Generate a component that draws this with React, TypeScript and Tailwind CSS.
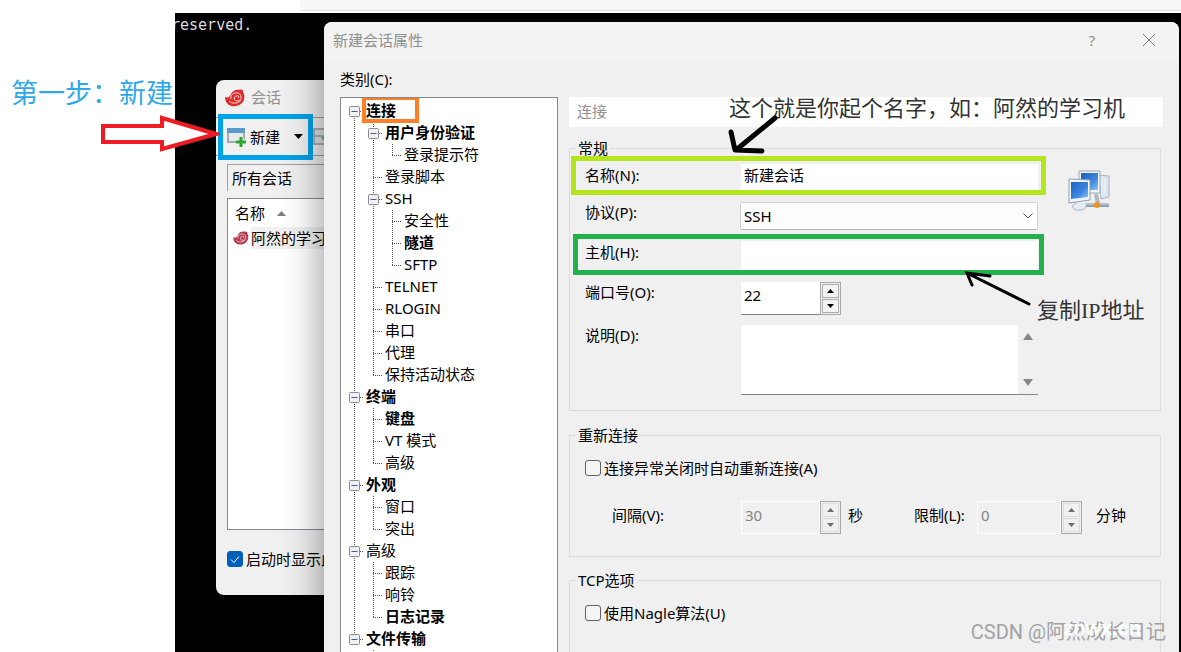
import { useState } from "react";
import type { ReactNode } from "react";

type Guide = "line" | "none";

interface TreeItem {
  label: string;
  depth: number;
  bold?: boolean;
  open?: boolean;
  selected?: boolean;
}

const TREE: TreeItem[] = [
  { label: "连接", depth: 0, bold: true, open: true, selected: true },
  { label: "用户身份验证", depth: 1, bold: true, open: true },
  { label: "登录提示符", depth: 2 },
  { label: "登录脚本", depth: 1 },
  { label: "SSH", depth: 1, open: true },
  { label: "安全性", depth: 2 },
  { label: "隧道", depth: 2, bold: true },
  { label: "SFTP", depth: 2 },
  { label: "TELNET", depth: 1 },
  { label: "RLOGIN", depth: 1 },
  { label: "串口", depth: 1 },
  { label: "代理", depth: 1 },
  { label: "保持活动状态", depth: 1 },
  { label: "终端", depth: 0, bold: true, open: true },
  { label: "键盘", depth: 1, bold: true },
  { label: "VT 模式", depth: 1 },
  { label: "高级", depth: 1 },
  { label: "外观", depth: 0, bold: true, open: true },
  { label: "窗口", depth: 1 },
  { label: "突出", depth: 1 },
  { label: "高级", depth: 0, open: true },
  { label: "跟踪", depth: 1 },
  { label: "响铃", depth: 1 },
  { label: "日志记录", depth: 1, bold: true },
  { label: "文件传输", depth: 0, bold: true, open: true },
  { label: "", depth: 1 },
];

// True when a later sibling exists at this depth, so its guide must go on
function continues(index: number, depth: number) {
  for (let i = index + 1; i < TREE.length; i++) {
    if (TREE[i].depth < depth) return false;
    if (TREE[i].depth === depth) return true;
  }
  return false;
}

function GuideCell({ kind }: { kind: Guide }) {
  return (
    <svg className="h-[22px] w-[19px] shrink-0" viewBox="0 0 19 22">
      {kind === "line" && <path d="M9.5 0V22" stroke="#555" strokeDasharray="1 1" />}
    </svg>
  );
}

function BranchCell({ first, last, open }: { first: boolean; last: boolean; open?: boolean }) {
  return (
    <svg className="h-[22px] w-[19px] shrink-0" viewBox="0 0 19 22">
      <g stroke="#555" strokeDasharray="1 1" fill="none">
        {!first && <path d="M9.5 0V12" />}
        {!last && <path d="M9.5 12V22" />}
        <path d="M9 11.5H19" />
      </g>
      {open && (
        <>
          <rect x="4.5" y="6.5" width="10" height="10" rx="1" fill="#f1f1f1" stroke="#8c8c8c" />
          <path d="M6.5 11.5h6" stroke="#4158a6" />
        </>
      )}
    </svg>
  );
}

function CategoryTree() {
  return (
    <ul className="w-[218px] shrink-0 overflow-hidden border border-b-0 border-[#828790] bg-white pt-[2px] pl-1">
      {TREE.map((item, i) => (
        <li key={i} className="flex h-[22px] items-start">
          {Array.from({ length: item.depth }, (_, d) => (
            <GuideCell key={d} kind={continues(i, d) ? "line" : "none"} />
          ))}
          <BranchCell first={i === 0} last={!continues(i, item.depth)} open={item.open} />
          <span className={item.bold ? "relative ml-[2px] font-bold leading-5" : "ml-[2px] leading-5"}>
            {item.label}
            {item.selected && (
              <span className="absolute -top-1 -left-1 h-[27px] w-[57px] border-4 border-[#ff7f27]" />
            )}
          </span>
        </li>
      ))}
    </ul>
  );
}

function SnailIcon({ className, color }: { className: string; color: string }) {
  return (
    <svg className={className} viewBox="0 0 20 18">
      <path
        d="M0 8C3 9 5 8 6 5C8 1 12 0 14 1C16 0 19 1 18 3C20 6 20 11 17 14C13 18 7 18 4 16C1 14 0 11 0 8Z"
        fill={color}
      />
      <path
        d="M6 10C5 6 9 3 13 4C17 5 17 11 13 12C9 13 8 8 11 7C13 6 15 8 13 9M4 12C7 15 13 15 16 11"
        fill="none"
        stroke="#fff"
        strokeOpacity="0.8"
      />
    </svg>
  );
}

function NewWindowIcon() {
  return (
    <svg className="h-5 w-5" viewBox="0 0 20 20">
      <rect x="1" y="2" width="16" height="13" fill="#e6eaec" stroke="#a7abae" strokeWidth="2" />
      <path d="M0 1h18v5H0z" fill="#5b98cc" />
      <path d="M14 10v10M9 15h10" stroke="#f0f0f0" strokeWidth="5" />
      <path d="M14 10v10M9 15h10" stroke="#2aa52f" strokeWidth="3" />
    </svg>
  );
}

function NetworkIcon() {
  return (
    <svg className="mt-[6px] h-[42px] w-[42px] shrink-0" viewBox="0 0 42 42">
      <defs>
        <linearGradient id="screen" x1="0" y1="0" x2="1" y2="1">
          <stop offset="0" stopColor="#1f5fc0" />
          <stop offset="0.6" stopColor="#3d86e0" />
          <stop offset="1" stopColor="#8cc9f5" />
        </linearGradient>
      </defs>
      <path d="M31 5l10 1v21l-8 2z" fill="#dbe5ec" stroke="#a5b5c0" />
      <path d="M34 8v18M37 9v16" stroke="#f4f8fa" />
      <path d="M11 1l21 0v22l-21 0z" fill="#f1f5f8" stroke="#9aabb7" />
      <path d="M13 3h17v17H13z" fill="url(#screen)" />
      <path d="M28 24l2 10" stroke="#aab9c3" strokeWidth="4" />
      <path d="M18 35h23" stroke="#8f9ea8" strokeWidth="4" />
      <path d="M18 34h23" stroke="#dde5ea" />
      <path d="M8 33c-6 3-3 8 4 7c5 0 7-3 6-7" fill="#e6ecf0" stroke="#a5b3bc" />
      <path d="M1 9l21 1v20l-21 3z" fill="#f1f5f8" stroke="#8ea0ae" />
      <path d="M3 12l17 0v15l-17 2z" fill="url(#screen)" />
      <circle cx="29" cy="35" r="3" fill="#f0941c" />
    </svg>
  );
}

function StepArrow({ up }: { up?: boolean }) {
  return (
    <svg className="h-1 w-[7px]" viewBox="0 0 7 4">
      <path d={up ? "M0 4L3.5 0L7 4z" : "M0 0h7L3.5 4z"} fill="currentColor" />
    </svg>
  );
}

interface SpinBoxProps {
  id: string;
  value: string;
  disabled?: boolean;
  className: string;
}

function SpinBox({ id, value, disabled, className }: SpinBoxProps) {
  const [text, setText] = useState(value);
  const step = (by: number) => setText(String(Math.max(0, Number(text) + by)));
  const button = disabled
    ? "flex flex-1 items-center justify-center border border-[#dcdcdc] text-[#6d6d6d]"
    : "flex flex-1 items-center justify-center border border-[#ababab] bg-[#f3f3f3] text-black";

  return (
    <div className={`flex h-[33px] shrink-0 ${className}`}>
      <input
        id={id}
        value={text}
        disabled={disabled}
        onChange={e => setText(e.target.value)}
        className={
          disabled
            ? "min-w-0 flex-1 border border-white bg-[#f0f0f0] px-[3px] pb-[5px] text-[#838383]"
            : "min-w-0 flex-1 border-b border-[#858585] bg-white px-[3px] pb-[6px]"
        }
      />
      <div className="flex w-[21px] flex-col gap-px border border-[#a8a8a8] p-px">
        <button type="button" aria-label="+" disabled={disabled} onClick={() => step(1)} className={button}>
          <StepArrow up />
        </button>
        <button type="button" aria-label="-" disabled={disabled} onClick={() => step(-1)} className={button}>
          <StepArrow />
        </button>
      </div>
    </div>
  );
}

function Group({ title, className, children }: { title: string; className: string; children: ReactNode }) {
  return (
    <fieldset className={`mr-[2px] border border-[#dcdcdc] ${className}`}>
      <legend className="ml-[6px] px-[2px] leading-5">{title}</legend>
      {children}
    </fieldset>
  );
}

function CheckRow({ id, label }: { id: string; label: string }) {
  return (
    <div className="flex h-[18px] items-center gap-[3px]">
      <input
        id={id}
        type="checkbox"
        className="h-4 w-4 appearance-none rounded-[3px] border border-[#626262] bg-[#f5f5f5] checked:bg-[#005fb8]"
      />
      <label htmlFor={id} className="leading-5">{label}</label>
    </div>
  );
}

function SessionsWindow() {
  return (
    <section className="absolute top-[67px] left-[41px] flex h-[515px] w-[400px] flex-col overflow-hidden rounded-lg bg-[#f0f0f0]">
      <div className="flex h-[37px] shrink-0 items-center gap-[6px] pb-[2px] pl-[9px] text-[#8f8f8f]">
        <SnailIcon className="h-[18px] w-5" color="#e02b2b" />
        <span>会话</span>
      </div>
      <div className="relative flex h-[39px] shrink-0 items-center border-y border-[#a0a0a0] pl-[11px]">
        <button type="button" className="flex items-center gap-[3px]">
          <NewWindowIcon />
          <span className="leading-5">新建</span>
        </button>
        <svg className="ml-[14px] h-[5px] w-[9px]" viewBox="0 0 9 5">
          <path d="M0 0h9L4.500 5z" />
        </svg>
        <svg className="ml-[10px] h-[18px] w-[18px]" viewBox="0 0 18 18">
          <path d="M1 1h12v7H1zM1 8h12v8H1z" fill="#dfe3e3" stroke="#a9afaf" strokeWidth="2" />
          <path d="M8 9l5 7V9z" fill="#57b783" />
        </svg>
        <span className="pointer-events-none absolute -top-1 left-[2px] h-[46px] w-[95px] border-[5px] border-[#00a2e8]" />
      </div>
      <div className="mt-2 ml-[11px] h-[27px] shrink-0 border-t border-l border-[#a0a0a0] pl-1 leading-[26px]">
        所有会话
      </div>
      <div className="mt-[7px] ml-[11px] h-[332px] shrink-0 border border-[#828790] bg-white">
        <div className="flex h-7 items-center gap-[12px] pl-[7px]">
          <span>名称</span>
          <svg className="h-[5px] w-[9px]" viewBox="0 0 9 5">
            <path d="M0 5L4.500 0L9 5z" fill="#7d7d7d" />
          </svg>
        </div>
        <div className="flex h-[22px] items-center gap-[2px] pl-[5px]">
          <SnailIcon className="h-[14px] w-4" color="#b23a52" />
          <span className="bg-[#f0f0f0] leading-[22px]">阿然的学习机</span>
        </div>
      </div>
      <div className="mt-[19px] flex items-center gap-[3px] pl-[11px]">
        <span className="relative flex h-4 w-4">
          <input
            id="on-start"
            type="checkbox"
            defaultChecked
            className="peer h-4 w-4 appearance-none rounded-[3px] border border-[#005fb8] bg-white checked:bg-[#005fb8]"
          />
          <svg className="pointer-events-none absolute inset-0 hidden h-4 w-4 peer-checked:block" viewBox="0 0 16 16">
            <path d="M4 8.500l3 3l5-6" fill="none" stroke="#fff" />
          </svg>
        </span>
        <label htmlFor="on-start" className="leading-5">启动时显示此</label>
      </div>
    </section>
  );
}

function GeneralGroup() {
  const [name, setName] = useState("新建会话");

  return (
    <Group title="常规" className="mt-[11px] pb-[15px]">
      <div className="flex gap-[30px] pt-[6px] pr-[50px] pl-[15px]">
        <div className="flex min-w-0 flex-1 flex-col gap-[11px] leading-5">
          <div className="relative flex h-[27px]">
            <label htmlFor="name" className="w-[156px] shrink-0 leading-[22px]">名称(N):</label>
            <input
              id="name"
              value={name}
              onChange={e => setName(e.target.value)}
              className="min-w-0 flex-1 bg-white px-[3px] pb-[6px]"
            />
            <span className="pointer-events-none absolute -top-2 -right-2 -bottom-1 -left-[14px] border-[5px] border-[#b5e61d]" />
          </div>
          <div className="flex h-7">
            <label htmlFor="protocol" className="w-[155px] shrink-0">协议(P):</label>
            <div className="relative flex min-w-0 flex-1">
              <select
                id="protocol"
                className="w-full appearance-none rounded-[2px] border border-[#d0d0d0] border-b-[#b5b5b5] bg-[#fdfdfd] px-[3px]"
              >
                <option>SSH</option>
              </select>
              <svg className="pointer-events-none absolute top-[11px] right-[5px] h-[6px] w-[10px]" viewBox="0 0 10 6">
                <path d="M0.500 0.500L5 5L9.500 0.500" fill="none" stroke="#555" />
              </svg>
            </div>
          </div>
          <div className="relative flex h-[30px]">
            <label htmlFor="host" className="w-[156px] shrink-0 leading-[22px]">主机(H):</label>
            <input id="host" className="min-w-0 flex-1 bg-white px-[3px]" />
            <span className="pointer-events-none absolute -top-[7px] -right-[6px] -bottom-1 -left-3 border-[5px] border-[#22b14c]" />
          </div>
          <div className="flex h-[32px]">
            <label htmlFor="port" className="w-[156px] shrink-0">端口号(O):</label>
            <SpinBox id="port" value="22" className="w-[100px]" />
          </div>
          <div className="flex h-[70px]">
            <label htmlFor="note" className="w-[156px] shrink-0">说明(D):</label>
            <div className="flex min-w-0 flex-1 border-b border-[#858585]">
              <textarea id="note" className="min-w-0 flex-1 resize-none bg-white" />
              <div className="flex w-5 flex-col items-center justify-between bg-[#f0f0f0] py-2 text-[#858585]">
                <svg className="h-[7px] w-[10px]" viewBox="0 0 10 7">
                  <path d="M0 7L5 0L10 7z" fill="currentColor" />
                </svg>
                <svg className="h-[7px] w-[10px]" viewBox="0 0 10 7">
                  <path d="M0 0h10L5 7z" fill="currentColor" />
                </svg>
              </div>
            </div>
          </div>
        </div>
        <NetworkIcon />
      </div>
    </Group>
  );
}

function ReconnectGroup() {
  return (
    <Group title="重新连接" className="mt-[14px] pb-[22px]">
      <div className="flex flex-col gap-6 pt-[14px] pl-[15px]">
        <CheckRow id="reconnect" label="连接异常关闭时自动重新连接(A)" />
        <div className="flex leading-7">
          <label htmlFor="interval" className="w-[156px] shrink-0 pl-[27px]">间隔(V):</label>
          <SpinBox id="interval" value="30" disabled className="w-[100px]" />
          <span className="ml-[7px] w-[66px] shrink-0">秒</span>
          <label htmlFor="limit" className="w-[63px] shrink-0">限制(L):</label>
          <SpinBox id="limit" value="0" disabled className="w-[105px]" />
          <span className="ml-[14px] shrink-0">分钟</span>
        </div>
      </div>
    </Group>
  );
}

function PropertiesDialog() {
  return (
    <section className="absolute top-[9px] right-[2px] bottom-0 left-[149px] flex flex-col overflow-hidden rounded-t-lg bg-[#f0f0f0] shadow-[0_0_40px_rgba(0,0,0,0.45)]">
      <header className="flex h-10 shrink-0 items-center bg-[#f3f3f3] pr-6 pb-1 pl-[9px] text-[#8f8f8f]">
        <h1 className="flex-1 leading-5">新建会话属性</h1>
        <button type="button" className="w-3 text-center">?</button>
        <button type="button" aria-label="关闭" className="ml-[45px]">
          <svg className="h-3 w-3" viewBox="0 0 12 12">
            <path d="M0 0L12 12M12 0L0 12" stroke="#777" />
          </svg>
        </button>
      </header>
      <p className="mt-[7px] shrink-0 pl-4 leading-5">类别(C):</p>
      <div className="mt-2 flex min-h-0 flex-1 gap-[11px] px-4">
        <CategoryTree />
        <div className="min-w-0 flex-1">
          <h2 className="h-[30px] bg-white pl-2 leading-7 text-[#929292]">连接</h2>
          <GeneralGroup />
          <ReconnectGroup />
          <Group title="TCP选项" className="mt-[13px]">
            <div className="pt-[14px] pb-[60px] pl-[15px]">
              <CheckRow id="nagle" label="使用Nagle算法(U)" />
            </div>
          </Group>
        </div>
      </div>

      {/* Handwritten notes laid over the form */}
      <p className="absolute top-[73px] left-[405px] font-['Liberation_Serif','Noto_Sans_CJK_SC',serif] text-[22px] leading-7 whitespace-nowrap text-[#333]">
        这个就是你起个名字，如：阿然的学习机
      </p>
      <svg className="absolute top-[90px] left-[404px] h-[42px] w-[52px]" viewBox="0 0 52 42">
        <path d="M47 6L8 38M3 20L7 38L34 39" fill="none" stroke="#000" strokeWidth="5" strokeLinecap="round" strokeLinejoin="round" />
      </svg>
      <svg className="absolute top-[248px] left-[640px] h-[40px] w-[70px]" viewBox="0 0 70 40">
        <path d="M65 34L3 3M26 6L3 3L8 15" fill="none" stroke="#000" strokeWidth="3" strokeLinecap="round" />
      </svg>
      <p className="absolute top-[275px] left-[713px] font-['Liberation_Serif','Noto_Sans_CJK_SC',serif] text-[22px] leading-7 whitespace-nowrap text-[#333]">
        复制IP地址
      </p>
    </section>
  );
}

export default function App() {
  return (
    <div className="relative flex h-screen flex-col overflow-hidden bg-white font-['Noto_Sans','Noto_Sans_CJK_SC',sans-serif] text-[15px] text-black">
      <div className="mb-[2px] ml-[300px] h-[11px] shrink-0 border-b border-[#e4e6e6] bg-[#f7f7f7]" />
      <div className="flex min-h-0 flex-1">
        <aside className="w-[175px] shrink-0 pt-[63px] pl-[11px]">
          <p className="font-['Liberation_Serif','Noto_Sans_CJK_SC',serif] text-[27px] leading-9 whitespace-nowrap text-[#2fa8ea]">
            第一步：新建
          </p>
        </aside>
        <main className="relative min-w-0 flex-1 overflow-hidden bg-black">
          <p className="-ml-1 pt-[2px] font-['DejaVu_Sans_Mono',monospace] text-[15px] leading-5 text-[#dcdcdc]">
            reserved.
          </p>
          <SessionsWindow />
          <PropertiesDialog />
        </main>
      </div>

      <svg className="absolute top-[114px] left-[100px] h-10 w-[120px]" viewBox="0 0 120 40">
        <path d="M3 12H62V4L116 20L62 35V28H3z" fill="#fff" stroke="#ed1c24" strokeWidth="4" />
      </svg>
      <p className="absolute right-[15px] bottom-[6px] font-['Roboto','Noto_Sans_CJK_SC',sans-serif] text-[20px] leading-7 text-[#a2a2a2]">
        CSDN @阿然成长日记
      </p>
      <p className="absolute right-[40px] bottom-[12px] font-['Liberation_Sans',sans-serif] text-[20px] leading-6 font-bold text-white">
        znwx.cn
      </p>
    </div>
  );
}
